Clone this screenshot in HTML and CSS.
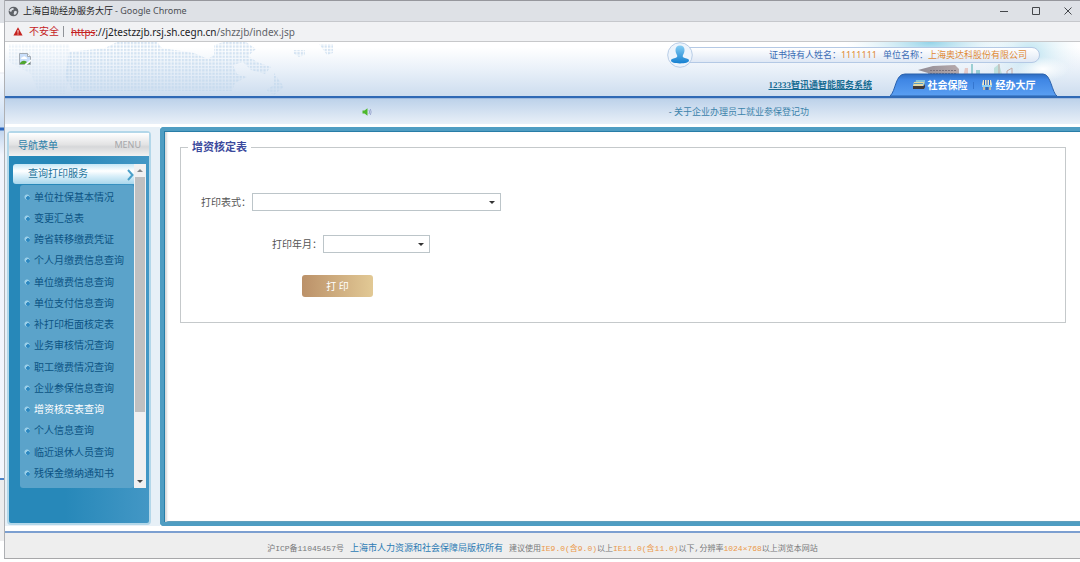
FILE: index.html
```html
<!DOCTYPE html>
<html lang="zh-CN">
<head>
<meta charset="utf-8">
<title>上海自助经办服务大厅</title>
<link rel="stylesheet" href="styles.css">
</head>
<body>
<div class="window">
  <div class="titlebar">
    <svg class="globe" viewBox="0 0 12 12" aria-hidden="true"><circle cx="6" cy="6" r="5.300" fill="#5f6368"/><path d="m2 3.800 2.500-1.600 2 .6-.5 1.400-1.800.5L4 6l-1.500.3L1.300 5.200zM6.500 6l1.800-.7 1.600 1-1 2.300-1.600 1.200L6 8.800 6.500 7.700z" fill="#dee1e6"/></svg>
    <span class="window-name">上海自助经办服务大厅</span>
    <span class="window-app">- Google Chrome</span>
    <div class="window-controls">
      <button type="button" aria-label="最小化"><svg viewBox="0 0 10 10"><path d="M1 5.500h8" /></svg></button>
      <button type="button" aria-label="最大化"><svg viewBox="0 0 10 10"><path d="M1.500 1.500h7v7h-7z" /></svg></button>
      <button type="button" aria-label="关闭"><svg viewBox="0 0 10 10"><path d="m1.500 1.500 7 7m0-7-7 7" /></svg></button>
    </div>
  </div>
  <div class="addressbar">
    <svg class="warning" viewBox="0 0 10 9" aria-hidden="true"><path d="M5 .3 9.600 8.500H.4z" fill="#c5221f"/><path d="M5 3v2.800M5 6.500v1" stroke="#fff" stroke-width=".9"/></svg>
    <span class="unsafe">不安全</span>
    <span class="url"><s>https</s><b>://j2testzzjb.rsj.sh.cegn.cn</b>/shzzjb/index.jsp</span>
  </div>

  <header class="banner">
    <svg class="map" viewBox="0 0 340 54" aria-hidden="true">
      <defs>
        <pattern id="dots" width="3.400" height="3.400" patternUnits="userSpaceOnUse"><rect width="2.300" height="2.300" fill="#bfd6ec"/></pattern>
      </defs>
      <g fill="url(#dots)">
        <path opacity=".3" d="M4 2h60l4 24-8 26H34l-8-20L4 20z"/>
        <path opacity=".65" d="M64 10 100 6l12-6h40l5 6 32 5 14 6 6-4V3l10-3h22l10 7-8 7 9 6 14 5-6 7-14-4-8-8-10 3 4 9 10 3-12 6-3 8H68l-8-14z"/>
        <path opacity=".65" d="m269 31 10 14-10 8-8-5 8-5zM288 8h12v5l-6 2-6-4zM314 2h14v9l-6 2z"/>
      </g>
    </svg>
    <svg class="city" viewBox="0 0 235 54" preserveAspectRatio="none" aria-hidden="true">
      <defs>
        <radialGradient id="sky"><stop offset="0" stop-color="#93d3e8"/><stop offset="1" stop-color="#d9edf6" stop-opacity="0"/></radialGradient>
        <radialGradient id="cloud"><stop offset="0" stop-color="#fff"/><stop offset="1" stop-color="#fff" stop-opacity="0"/></radialGradient>
        <linearGradient id="hall" x1="0" x2="1"><stop offset="0" stop-color="#8f8b94"/><stop offset="1" stop-color="#b6a9ab"/></linearGradient>
      </defs>
      <ellipse cx="85" cy="0" rx="85" ry="26" fill="url(#sky)"/>
      <ellipse cx="185" cy="10" rx="50" ry="42" fill="url(#sky)" opacity=".6"/>
      <ellipse cx="198" cy="27" rx="26" ry="12" fill="url(#cloud)"/>
      <path d="m73 28 15-4 22-1 4 4v8H84l-1-4z" fill="url(#hall)"/>
      <path d="M85 28.500h27m-27 3h27" stroke="#79717b" stroke-dasharray="2 1"/>
      <path d="m118 35 2-9h3v9" fill="#e5c9c6"/>
      <path d="M126 35V22h2v13m3 0v-7h4v7" fill="#9bcfd3"/>
      <path d="M149 35v-9l5-4 4 13" fill="#bfe0dc"/>
      <path d="M154 22v13m8-1v-5l5-3v8" fill="none" stroke="#c3aaa6"/>
    </svg>
    <div class="logo">
      <svg viewBox="0 0 12 12" role="img" aria-label="图片"><path d="M.5.5h8l3 3v8H.5z" fill="#c9defa" stroke="#a3abb4"/><path d="M8.500.5v3h3" fill="#fff" stroke="#a3abb4"/><path d="M2 6q0-2 2-2 1-1.500 2.500 0Q8 4 8 6z" fill="#fff"/><path d="M1 11v-1q3-4 7-1l-2 2z" fill="#4fa62e"/><path d="m8.500 11 2.500-2v2z" fill="#4fa62e"/><path d="M6 12.300 12.300 7" stroke="#fff" stroke-width="1.500"/></svg>
    </div>
    <div class="banner-side">
      <div class="account">
        <svg class="avatar" viewBox="0 0 26 26" aria-hidden="true">
          <defs><linearGradient id="person" x2="0" y2="1"><stop stop-color="#85cdf3"/><stop offset="1" stop-color="#147fd0"/></linearGradient></defs>
          <circle cx="13" cy="13" r="12.300" fill="#edf4fc" stroke="#b9cde6"/>
          <path d="M13 3.500c-3 0-4.500 2-4.500 4.500 0 3 1.200 4 1.700 5.500.3 1-.2 2-2 2.500-2.700.6-4.200 1-4.200 2.600C4 20.500 8 21.500 13 21.500s9-1 9-2.900c0-1.600-1.500-2-4.200-2.600-1.800-.5-2.300-1.500-2-2.500.5-1.500 1.700-2.500 1.700-5.500 0-2.500-1.500-4.500-4.500-4.500z" fill="url(#person)"/>
        </svg>
        <div class="account-info">
          <span>证书持有人姓名：</span><em>1111111</em>
          <span class="company">单位名称：</span><em>上海奥达科股份有限公司</em>
        </div>
      </div>
      <div class="links">
        <a class="service" href="#">12333智讯通智能服务系统</a>
        <nav class="tabs">
          <svg class="tabs-shape" viewBox="0 0 167 23" preserveAspectRatio="none" aria-hidden="true">
            <defs><linearGradient id="tab" x2="0" y2="1"><stop stop-color="#2d6cc0"/><stop offset=".25" stop-color="#3f86e4"/><stop offset="1" stop-color="#5a9ff2"/></linearGradient></defs>
            <path d="M0 23C6 18 5 1 15 1h138c8 0 9 19 14 22z" fill="url(#tab)" stroke="#2b62ad"/>
            <path d="M83.500 9v7" stroke="#3576cf"/>
          </svg>
          <a href="#"><svg viewBox="0 0 14 12" aria-hidden="true"><path d="M4 1h9v5H3z" fill="#7fc0dc"/><path d="M2 3h10l-1 4H1z" fill="#e3d9a4"/><path d="M2 4.500h9" stroke="#5b9dc0"/><path d="M1 7h11l1-3v4l-1 2H1z" fill="#3f3a3a"/></svg>社会保险</a>
          <a href="#"><svg viewBox="0 0 14 12" aria-hidden="true"><path d="M3 1h8l1 5H2z" fill="#f0e6c6"/><path d="M4.500 1v5m2.500-5v5m2.500-5v5" stroke="#1d62c8"/><path d="M2 6h10v2H2z" fill="#8fd0f4"/><path d="M3 8h2v3H3zm6 0h2v3H9z" fill="#c4b9a4"/><path d="M5.500 8h3v3h-3z" fill="#3268b4"/></svg>经办大厅</a>
        </nav>
      </div>
    </div>
  </header>

  <div class="notice">
    <svg class="speaker" viewBox="0 0 10 8" aria-hidden="true"><path d="M.5 2.500h2L5.500.3v7.400L2.500 5.500h-2z" fill="#4db82c"/><path d="M7 2q1.300 2 0 4m1.300-5q1.700 3 0 6" fill="none" stroke="#8f9bc9" stroke-width=".8"/></svg>
    <a href="#">- 关于企业办理员工就业参保登记功</a>
  </div>

  <div class="workspace">
    <aside class="side">
      <div class="menu">
        <div class="menu-head"><h2>导航菜单</h2><span>MENU</span></div>
        <div class="menu-body">
          <div class="menu-list">
            <button class="category" type="button">查询打印服务<svg viewBox="0 0 7 12" aria-hidden="true"><path d="m1 1 4.500 5L1 11" /></svg></button>
            <ul>
              <li><a href="#">单位社保基本情况</a></li>
              <li><a href="#">变更汇总表</a></li>
              <li><a href="#">跨省转移缴费凭证</a></li>
              <li><a href="#">个人月缴费信息查询</a></li>
              <li><a href="#">单位缴费信息查询</a></li>
              <li><a href="#">单位支付信息查询</a></li>
              <li><a href="#">补打印柜面核定表</a></li>
              <li><a href="#">业务审核情况查询</a></li>
              <li><a href="#">职工缴费情况查询</a></li>
              <li><a href="#">企业参保信息查询</a></li>
              <li><a class="current" href="#">增资核定表查询</a></li>
              <li><a href="#">个人信息查询</a></li>
              <li><a href="#">临近退休人员查询</a></li>
              <li><a href="#">残保金缴纳通知书</a></li>
            </ul>
          </div>
          <div class="scrollbar" aria-hidden="true"><i class="up"></i><div class="track"><div class="thumb"></div></div><i class="down"></i></div>
        </div>
      </div>
    </aside>
    <main class="content">
      <form>
        <fieldset>
          <legend>增资核定表</legend>
          <div class="row">
            <label for="form-type">打印表式：</label>
            <span class="picker wide"><select id="form-type"><option></option></select></span>
          </div>
          <div class="row month">
            <label for="month">打印年月：</label>
            <span class="picker"><select id="month"><option></option></select></span>
          </div>
          <button class="print" type="button">打 印</button>
        </fieldset>
      </form>
    </main>
  </div>

  <footer class="footer">
    <span>沪ICP备11045457号</span>
    <a href="#">上海市人力资源和社会保障局版权所有</a>
    <span>建议使用<em>IE9.0(含9.0)</em>以上<em>IE11.0(含11.0)</em>以下,分辨率<em>1024×768</em>以上浏览本网站</span>
  </footer>
</div>
</body>
</html>
```
FILE: styles.css
```css
* { box-sizing: border-box; }

body {
  margin: 0;
  min-height: 100vh;
  padding: 0 0 3px 4px;
  display: flex;
  font: 10px/14px "Noto Sans", "Noto Sans CJK SC", sans-serif;
  color: #555;
  background: linear-gradient(#dee1e6 0 23px, #fff 23px 72px, #e7e9f0 73px, #f8fbff 74px, #c9dcf2 127px, #2c66bc 128px 130px, #c2d6ee 131px, #f1f5fd 155px, #f3f6fd 478px, #4d83c9 478px 480px, #ededee 480px 541px, #fff 541px);
}

a { color: inherit; text-decoration: none; }
em { font-style: normal; }
button { font: inherit; border: 0; padding: 0; background: none; }

.window {
  flex: 1;
  min-width: 0;
  display: flex;
  flex-direction: column;
  border-left: 1px solid #aeb0b4;
  border-bottom: 1px solid #a7a7a9;
  background: #fff;
}

/* browser frame */
.titlebar {
  height: 22px;
  display: flex;
  align-items: center;
  padding-left: 3px;
  border-top: 1px solid #96979d;
  border-bottom: 1px solid #c6c8cc;
  background: linear-gradient(#6fbfa8, #6fbfa8) 68% 0 / 178px 1px no-repeat border-box, #dee1e6;
  background-position: 81% 0;
  color: #222;
}
.globe { width: 11px; height: 11px; margin-right: 4px; }
.window-name { font-size: 9px; }
.window-app { margin-left: 2px; font-size: 9px; color: #4c4f54; }
.window-controls { margin-left: auto; display: flex; gap: 22px; padding-right: 7px; }
.window-controls button { width: 10px; height: 10px; display: flex; }
.window-controls svg { width: 10px; height: 10px; fill: none; stroke: #44474b; }

.addressbar {
  height: 20px;
  display: flex;
  align-items: center;
  padding-left: 8px;
  border-bottom: 1px solid #c7c8ca;
  background: #f1f2f4;
}
.warning { width: 10px; height: 9px; margin-right: 6px; }
.unsafe { color: #c5221f; padding-right: 4px; margin-right: 7px; border-right: 1px solid #909398; line-height: 11px; }
.url { color: #5f6368; }
.url s { color: #c5221f; }
.url b { color: #202124; font-weight: 400; }

/* page banner */
.banner {
  position: relative;
  height: 56px;
  display: flex;
  justify-content: space-between;
  border-bottom: 2px solid #2f69b5;
  background: linear-gradient(#fff 10%, #eaf1f9 50%, #cdddef);
}
.map, .city { position: absolute; top: 0; height: 54px; }
.map { left: 0; width: 340px; }
.city { right: 0; width: 235px; }
.logo { position: relative; padding: 11px 14px; }
.logo svg { width: 12px; height: 12px; }
.banner-side {
  position: relative;
  display: flex;
  flex-direction: column;
  justify-content: space-between;
}
.account { display: flex; align-items: center; margin-right: 40px; }
.avatar { position: relative; width: 26px; height: 26px; margin-right: -13px; }
.account-info {
  width: 360px;
  height: 16px;
  display: flex;
  align-items: center;
  justify-content: flex-end;
  padding-right: 12px;
  border: 1px solid #b4c9e5;
  border-radius: 8px;
  background: linear-gradient(#fff, #dfe8f5);
  color: #3b6cb5;
  font-size: 9px;
}
.account-info em { color: #e08a35; }
.company { margin-left: 6px; }
.links { display: flex; justify-content: flex-end; align-items: center; padding-right: 23px; gap: 18px; }
.service { color: #176c92; font: bold 9px/14px "Liberation Serif", "Noto Sans CJK SC", serif; text-decoration: underline; }
.tabs {
  position: relative;
  width: 167px;
  height: 23px;
  display: flex;
  align-items: center;
  justify-content: center;
  gap: 12px;
  color: #fff;
  font-weight: 700;
}
.tabs-shape { position: absolute; inset: 0; width: 100%; height: 100%; }
.tabs a { position: relative; display: flex; align-items: center; gap: 2px; }
.tabs a svg { width: 14px; height: 12px; }

.notice {
  height: 26px;
  display: flex;
  align-items: center;
  padding-left: 33%;
  border-top: 1px solid #9fbbe0;
  background: linear-gradient(#bdd2ea, #e9f0f8);
  color: #3c83ab;
  font-size: 9px;
}
.speaker { width: 10px; height: 8px; margin-left: 2px; margin-right: 297px; }
.notice a { white-space: nowrap; }

/* sidebar */
.workspace { flex: 1; display: flex; margin-top: 3px; }
.side { width: 155px; padding: 4px 8px 1px 2px; background: #e7f0f7; }
.menu {
  width: 144px;
  height: 100%;
  display: flex;
  flex-direction: column;
  border: 2px solid #b3d7e9;
  border-radius: 4px;
  background: linear-gradient(90deg, #2788b9 40%, #4397c5);
}
.menu-head {
  height: 23px;
  display: flex;
  align-items: center;
  justify-content: space-between;
  padding: 0 8px 0 9px;
  background: linear-gradient(#fff, #e3e3e4 50%, #d6d7d9 60%, #f2f2f2);
  color: #a6a7aa;
  font-size: 9px;
}
.menu-head h2 { margin: 0; font-size: 10px; font-weight: 400; color: #2d81a9; }
.menu-body { display: flex; padding: 8px 3px 0 4px; }
.menu-list { flex: 1; }
.category {
  width: 100%;
  height: 20px;
  display: flex;
  align-items: center;
  justify-content: space-between;
  padding: 0 0 2px 15px;
  border-radius: 3px 0 0 3px;
  background: linear-gradient(#c5e7f6, #fff 35%, #d9eff9 60%, #a9d7ec);
  color: #23739b;
}
.category svg { width: 7px; height: 12px; margin-top: 3px; fill: none; stroke: #4ba0c9; stroke-width: 2; }
.menu-list ul {
  list-style: none;
  margin: 1px 5px 0 7px;
  margin-right: 0;
  padding: 1px 0 5px;
  border-radius: 3px;
  background: #5ba3ca;
}
.menu-list li {
  padding: 4px 0 3px 14px;
  background: radial-gradient(circle at 8px 12px, #2c86bf 0 1px, #3f97cb 2px, transparent 2px), radial-gradient(circle at 7px 11px, #9bd0ea 0 2px, transparent 3px);
  color: #0c5384;
  white-space: nowrap;
}
.menu-list li:nth-child(4n) { padding-bottom: 4px; }
.current { color: #fff; }
.scrollbar { width: 12px; display: flex; flex-direction: column; align-items: center; background: #f0f0f1; }
.scrollbar i { height: 13px; display: flex; align-items: center; }
.scrollbar i::before { content: ""; border: 3px solid transparent; }
.scrollbar .up::before { border-top: 0; border-bottom-color: #85878a; }
.scrollbar .down::before { border-bottom: 0; border-top-color: #444; }
.track { flex: 1; width: 10px; }
.thumb { height: 79%; background: #c0c0c1; }

/* form */
.content {
  flex: 1;
  padding: 8px 14px 0 16px;
  border: 4px solid #4f9dc2;
  border-right: 0;
  border-radius: 4px 0 0 4px;
  box-shadow: inset 1px 1px #287da7, inset 3px 0 2px #dadada, inset 0 -1px #3589b1;
}
fieldset { margin: 0; padding: 0 20px 25px; border: 1px solid #c5c9cb; }
legend { margin-left: -13px; padding: 0 4px; font-size: 11px; line-height: 16px; font-weight: 700; color: #3c4a9d; }
.row { display: flex; align-items: center; margin-top: 38px; }
.row label { width: 51px; white-space: nowrap; }
.month { margin: 24px 0 22px 71px; }
.picker { position: relative; width: 107px; height: 18px; }
.wide { width: 249px; }
.picker select {
  display: block;
  width: 100%;
  height: 100%;
  appearance: none;
  border: 1px solid #bcc5c9;
  border-radius: 0;
  background: #fff;
}
.picker::after {
  content: "";
  position: absolute;
  right: 6px;
  top: 8px;
  border: 3px solid transparent;
  border-top-color: #333;
  border-bottom: 0;
  pointer-events: none;
}
.print {
  display: block;
  width: 71px;
  height: 22px;
  margin-left: 101px;
  border-radius: 3px;
  background: linear-gradient(90deg, #bb9169, #e2c995);
  color: #fff;
}

.footer {
  height: 27px;
  margin-top: 5px;
  display: flex;
  align-items: center;
  justify-content: center;
  gap: 6px;
  padding-top: 6px;
  border-top: 2px solid #7c9fd0;
  background: #eee;
  color: #77787a;
  font: 8px/12px "Liberation Mono", "Noto Sans CJK SC", monospace;
}
.footer a { font-size: 9px; color: #2d7bb4; }
.footer em { color: #eb9849; }
```
